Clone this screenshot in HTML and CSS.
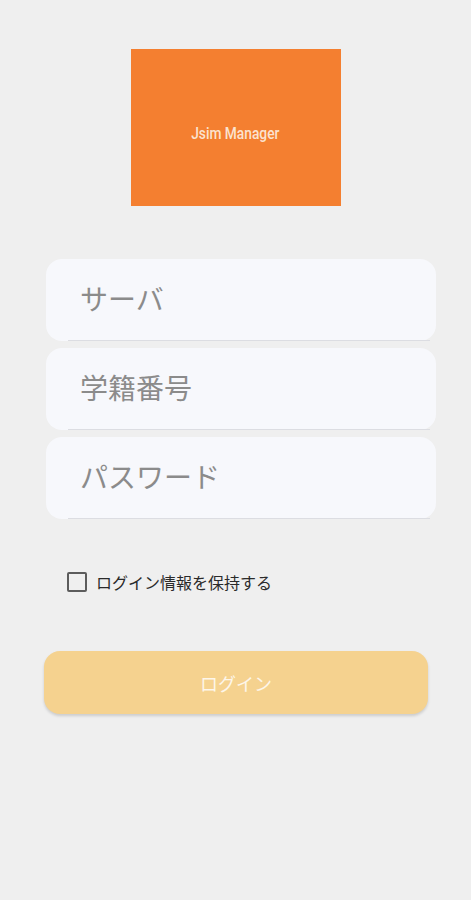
FILE: index.html
```html
<!DOCTYPE html>
<html lang="ja">
  <head>
    <meta charset="UTF-8" />
    <meta name="viewport" content="width=device-width, initial-scale=1.0" />
    <title>Jsim Manager - ログイン</title>
    <link rel="stylesheet" href="styles.css">
  </head>
  <body>
    <main class="login-page">
      <div class="logo-box">
        <span class="logo-text">Jsim Manager</span>
      </div>

      <form class="login-form">
        <div class="field">
          <input type="text" placeholder="サーバ" />
        </div>
        <div class="field">
          <input type="text" placeholder="学籍番号" />
        </div>
        <div class="field">
          <input type="password" placeholder="パスワード" />
        </div>

        <label class="remember">
          <span class="checkbox"></span>
          <span class="remember-text">ログイン情報を保持する</span>
        </label>

        <button type="button" class="login-button">ログイン</button>
      </form>
    </main>
  </body>
</html>
```

FILE: styles.css
```css
/* Reset */
* {
  margin: 0;
  padding: 0;
  box-sizing: border-box;
  font-family: Roboto, "Noto Sans CJK JP", sans-serif;
}

body {
  background-color: #efefef;
  width: 471px;
  height: 900px;
}

.login-page {
  display: flex;
  flex-direction: column;
  align-items: center;
  padding-top: 49px;
}

/* Logo */
.logo-box {
  width: 210px;
  height: 157px;
  background-color: #f47f30;
  display: flex;
  justify-content: center;
  align-items: center;
  padding-top: 11px;
}

.logo-text {
  color: #fbe3cf;
  font-size: 16px;
  font-weight: 500;
  transform: scaleX(0.86);
}

/* Form */
.login-form {
  width: 100%;
  display: flex;
  flex-direction: column;
  margin-top: 53px;
}

.field {
  margin: 0 35px 7px 46px;
  height: 82px;
  background-color: #f7f8fc;
  border-radius: 16px;
  position: relative;
}

.field::after {
  content: "";
  position: absolute;
  left: 22px;
  right: 6px;
  bottom: 0;
  height: 1px;
  background-color: #dcdde2;
}

.field input {
  width: 100%;
  height: 100%;
  border: none;
  background: transparent;
  outline: none;
  padding: 0 34px 0 34px;
  font-size: 28px;
  color: #333;
}

.field input::placeholder {
  color: #8b8b8b;
}

/* Remember me */
.remember {
  display: flex;
  align-items: center;
  margin: 44px 0 0 67px;
}

.checkbox {
  width: 20px;
  height: 20px;
  border: 2px solid #5c5c5c;
  border-radius: 2px;
}

.remember-text {
  margin-left: 9px;
  font-size: 16px;
  color: #2a2a2a;
}

/* Login button */
.login-button {
  margin: 57px 43px 0 44px;
  height: 63px;
  background-color: #f5d28f;
  color: #fdf6ea;
  font-size: 18px;
  border: none;
  border-radius: 16px;
  box-shadow: 0 2px 3px rgba(0, 0, 0, 0.15);
  cursor: pointer;
}
```
